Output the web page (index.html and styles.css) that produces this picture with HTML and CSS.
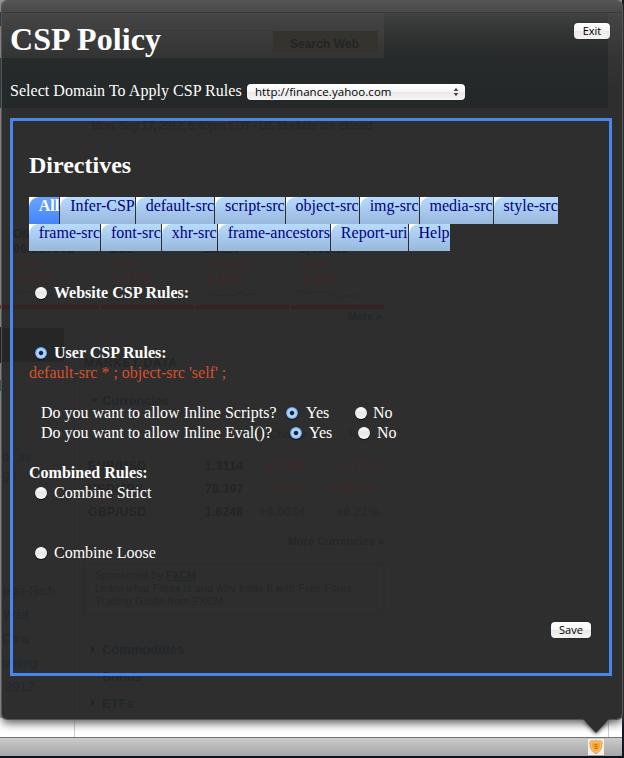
FILE: index.html
```html
<!DOCTYPE html>
<html lang="en">
<head>
<meta charset="utf-8">
<title>CSP Policy</title>
<link rel="stylesheet" href="styles.css">
</head>
<body>
<div class="screen">
  <svg class="page-behind" width="624" height="758" viewBox="0 0 624 758" aria-hidden="true">
    <rect width="624" height="758" fill="#989898"/>
    <path d="M0 12h2v14H0zM0 58h2v50H0z" fill="#152b35"/>
    <path d="M0 305h2v4H0z" fill="#8e201c"/>
    <path d="M0 327h2v36H0z" fill="#000"/>
    <path d="M0 380h2v11H0z" fill="#24506e"/>
    <rect y="718" width="624" height="20" fill="#fff"/>
    <path d="M74.500 718v20M608.500 718v20" stroke="#ccc"/>
    <rect x="622" width="2" height="758" fill="#15151f"/>
  </svg>
  <main class="panel">
    <svg class="ghost" width="620" height="718" viewBox="2 1 620 718" aria-hidden="true">
      <defs><linearGradient id="shade" x1="0" y1="0" x2="0" y2="1"><stop offset="0" stop-color="#222626" stop-opacity=".15"/><stop offset="1" stop-color="#222626" stop-opacity=".7"/></linearGradient></defs>
      <path d="M384 13h224v45H384z" fill="url(#shade)"/>
      <path d="M2 58h606v50H2z" fill="#222626" opacity=".7"/>
      <path d="M2 12.500h620" stroke="#222" opacity=".4"/>
      <path d="M2 30.500h270" stroke="#222" opacity=".15"/>
      <rect x="273" y="31" width="105" height="21" fill="#35332d"/>
      <rect x="2" y="328" width="62" height="34" fill="#262626"/>
      <path d="M2 307h97M101 307h93M196 307h93M291 307h93" stroke="#352324" stroke-width="4"/>
      <path d="M14 291l8 2 7-1 9 4 9 0 8-1M110 292l8 2 8-1 8 5 8 1 9-2M205 296l7-2 8 2 7-2 6 2 8-4 6 3 9-1M298 290l9 3 14-1 9 1 8 6 6-3h15" stroke="#242b2d" fill="none"/>
      <path d="M84 563.500h300v51H84zM74.500 340v378" stroke="#2b2b2b" fill="none"/>
      <path d="M91 398h7l-3.500 4zM91 645l4 4-4 4zM91 699l4 4-4 4z" fill="#20262a"/>
      <g class="ghost-strong">
        <text x="290" y="48" textLength="69">Search Web</text>
        <text class="faint" x="91" y="130" textLength="282">Mon, Sep 17, 2012, 6:40pm EDT - US Markets are closed</text>
        <text x="13" y="238">OIL</text><text x="13" y="253" textLength="61">96.550002</text>
        <text x="109" y="253">1.31</text><text x="203" y="253">1.3114</text><text x="299" y="253" textLength="49">1,461.19</text>
        <text x="84" y="367" textLength="93">MARKET DATA</text>
        <text x="88" y="470" textLength="58">EUR/USD</text><text x="88" y="493" textLength="55">USD/JPY</text><text x="88" y="516" textLength="58">GBP/USD</text>
        <text x="205" y="470" textLength="38">1.3114</text><text x="205" y="493" textLength="38">78.397</text><text x="205" y="516" textLength="38">1.6248</text>
      </g>
      <g class="ghost-red">
        <text x="13" y="268">-2.35</text><text x="13" y="282" textLength="40">-2.37%</text>
        <text x="108" y="268">-0.03</text><text x="108" y="282" textLength="40">-1.71%</text>
        <text x="203" y="268">-0.0014</text><text x="203" y="282" textLength="40">-0.11%</text>
        <text x="298" y="268">-6.00</text><text x="298" y="282" textLength="40">-0.34%</text>
        <text x="262" y="470" textLength="43">-0.0014</text><text x="269" y="493" textLength="36">-0.003</text>
        <text x="339" y="470" textLength="40">-0.11%</text><text x="324" y="493" textLength="55">-0.0038%</text>
      </g>
      <g class="ghost-green"><text x="259" y="516" textLength="46">+0.0034</text><text x="336" y="516" textLength="43">+0.21%</text></g>
      <g class="ghost-head">
        <text x="102" y="405" textLength="67">Currencies</text><text x="102" y="654" textLength="82">Commodities</text>
        <text x="102" y="681" textLength="40">Bonds</text><text x="102" y="708" textLength="32">ETFs</text>
      </g>
      <g class="ghost-small">
        <text x="348" y="320" font-weight="bold">More »</text>
        <text x="288" y="545" textLength="96" font-weight="bold">More Currencies »</text>
        <text x="95" y="579" textLength="68">Sponsored by</text><text x="166" y="579" font-weight="bold" text-decoration="underline">FXCM</text>
        <text x="95" y="592" textLength="257">Learn what Forex is and why trade it with Free Forex</text>
        <text x="95" y="605" textLength="128">Trading Guide from FXCM</text>
        <text x="270" y="438">Change</text><text x="348" y="438">% C</text>
      </g>
      <g class="ghost-link">
        <text x="2" y="461">or as</text><text x="2" y="479">gh</text>
        <text x="3" y="595">ega-Rich</text><text x="3" y="619">Wait</text><text x="2" y="643" textLength="27">China</text><text x="2" y="667">oming</text><text x="5" y="691">2012</text>
      </g>
    </svg>

    <header class="top">
      <div class="title-row"><h1>CSP Policy</h1><button class="button exit">Exit</button></div>
      <div class="domain-row">
        <span class="domain-label">Select Domain To Apply CSP Rules</span>
        <div class="select"><span class="domain">http://finance.yahoo.com</span>
          <svg width="6" height="10" viewBox="0 0 6 10"><path d="M3 .8L5.300 4H.7zM3 9.200L.7 6h4.600z" fill="#444"/></svg>
        </div>
      </div>
    </header>

    <section class="frame">
      <h2>Directives</h2>
      <nav class="tabs">
        <div class="tab-row">
          <a class="tab active"><span>All</span></a><a class="tab"><span>Infer-CSP</span></a><a class="tab"><span>default-src</span></a><a class="tab"><span>script-src</span></a><a class="tab"><span>object-src</span></a><a class="tab"><span>img-src</span></a><a class="tab"><span>media-src</span></a><a class="tab"><span>style-src</span></a>
        </div>
        <div class="tab-row">
          <a class="tab"><span>frame-src</span></a><a class="tab"><span>font-src</span></a><a class="tab"><span>xhr-src</span></a><a class="tab"><span>frame-ancestors</span></a><a class="tab"><span>Report-uri</span></a><a class="tab"><span>Help</span></a>
        </div>
      </nav>
      <div class="rules">
        <label class="option strong"><i class="radio"></i>Website CSP Rules:</label>
        <div class="user-rules">
          <label class="option strong"><i class="radio on"></i>User CSP Rules:</label>
          <p class="policy">default-src * ; object-src 'self' ;</p>
        </div>
        <div class="questions">
          <div class="question scripts"><span>Do you want to allow Inline Scripts?</span><i class="radio on"></i><span>Yes</span><i class="radio"></i><span>No</span></div>
          <div class="question eval"><span>Do you want to allow Inline Eval()?</span><i class="radio on"></i><span>Yes</span><i class="radio"></i><span>No</span></div>
        </div>
        <div class="combined">
          <p class="strong">Combined Rules:</p>
          <label class="option"><i class="radio"></i>Combine Strict</label>
          <label class="option loose"><i class="radio"></i>Combine Loose</label>
        </div>
      </div>
      <div class="actions"><button class="button save">Save</button></div>
    </section>
    <svg class="pointer" width="32" height="18" viewBox="0 0 32 18"><path d="M3 0h26L16 14z" fill="#2e2e2e"/></svg>
  </main>
  <footer class="addon-bar">
    <svg class="shield" width="16" height="16" viewBox="0 0 16 16">
      <rect width="16" height="16" fill="#f3f0ec"/>
      <path d="M8 1.200L10 2.300l2.500-.8L14.400 4l-.8 1.600c.3 4-1.400 6.900-5.600 9.200C3.800 12.500 2.100 9.600 2.400 5.600L1.600 4l1.900-2.500 2.500.8z" fill="#fbbd60" stroke="#d99050" stroke-width=".8"/>
      <path d="M8 3.500c2 1 3 .6 4 .8.200 3.800-1 6-4 8-3-2-4.200-4.200-4-8 1 0 2 .2 4-.8z" fill="#f8a22c"/>
      <path d="M9.400 5.500H7v2h2v2H6.700" fill="none" stroke="#c8721c" stroke-width=".9"/>
    </svg>
  </footer>
  <div class="desktop-edge"></div>
</div>
</body>
</html>
```

FILE: styles.css
```css
* { box-sizing: border-box; }
body { margin: 0; background: #fff; overflow: hidden; }
h1, h2, p { margin: 0; }
.screen {
  position: relative;
  width: 624px;
  height: 758px;
  overflow: hidden;
  display: flex;
  flex-direction: column;
  padding-top: 1px;
  font: 16px/20px "Liberation Serif", "Times New Roman", serif;
  color: #fff;
}
.page-behind { position: absolute; left: 0; top: 0; }
.panel {
  position: relative;
  flex: none;
  width: 620px;
  height: 718px;
  margin: 0 0 18px 2px;
  padding: 0 10px 0 8px;
  border-radius: 5px;
  background: linear-gradient(#545454, #444 16px, #343434 55px, #2e2e2e 90px);
  box-shadow: 0 0 0 1px #555, 0 4px 10px #555;
}
.ghost { position: absolute; left: 0; top: 0; border-radius: 5px; font-family: "Liberation Sans", Arial, sans-serif; }
.ghost-strong { font-size: 12px; font-weight: bold; fill: #232525; }
.ghost-strong .faint { fill: #282828; }
.ghost-red { font-size: 12px; font-weight: bold; fill: #3c2929; }
.ghost-green { font-size: 12px; font-weight: bold; fill: #252b27; }
.ghost-head { font-size: 13px; font-weight: bold; fill: #21272b; }
.ghost-small { font-size: 10.5px; fill: #242729; }
.ghost-link { font-size: 13px; fill: #22292e; }
.top { position: relative; height: 117px; }
.title-row { display: flex; justify-content: space-between; height: 80px; padding-top: 18px; }
h1 { font-size: 32px; line-height: 40px; letter-spacing: .1px; }
.button {
  height: 16px;
  padding: 0;
  border: 0;
  border-radius: 4px;
  background: linear-gradient(#fff, #f7f7f7 50%, #e8e8e8 51%, #f4f4f4);
  box-shadow: 0 0 1px #000;
  font: 11px/16px "Open Sans", sans-serif;
  color: #000;
}
.exit { width: 36px; margin: 4px 2px 0 0; }
.domain-row { display: flex; height: 20px; }
.domain-label { width: 237px; white-space: nowrap; letter-spacing: .04px; }
.select {
  display: flex;
  align-items: center;
  justify-content: space-between;
  width: 218px;
  height: 16px;
  margin-top: 3px;
  padding: 0 6px 0 8px;
  border-radius: 4px;
  background: linear-gradient(#fff, #f7f7f7 50%, #e8e8e8 51%, #f6f6f6);
  font: 11.5px/16px "Open Sans", sans-serif;
  letter-spacing: .06px;
  color: #000;
}
.frame {
  position: relative;
  width: 602px;
  height: 558px;
  padding: 29px 17px 0 16px;
  border: 3px solid #4885ec;
}
h2 { font-size: 24px; line-height: 30px; height: 47px; }
.tab-row { display: flex; height: 27px; }
.tab { flex: none; margin-right: 1px; background: #fff; color: #000080; }
.tab span {
  display: block;
  height: 27px;
  padding: 0 .3px 0 9.7px;
  border-top-left-radius: 10px;
  background: linear-gradient(#b7dbff, #98b8dc);
  line-height: 18px;
}
.tab.active { font-weight: bold; color: #fff; }
.tab.active span { background: linear-gradient(#6ba4ff, #4384fa); }
.rules { padding-top: 32px; }
.option { display: flex; align-items: center; gap: 7px; padding-left: 6px; height: 20px; }
.strong { font-weight: bold; }
.radio {
  display: block;
  width: 12px;
  height: 12px;
  border-radius: 50%;
  background: linear-gradient(#fff, #e6e6e6 50%, #f8f8f8);
  box-shadow: 0 1px 1px #111;
}
.radio.on { background: radial-gradient(circle, #101c30 0 1.4px, #2c507c 2px, #b5dbff 2.8px, #a3ccf8 4.5px, #5c91d0 6px); }
.user-rules { padding-top: 40px; }
.policy { color: #d6522f; }
.questions { padding: 20px 0 20px 12px; }
.question { display: grid; align-items: center; height: 20px; white-space: nowrap; }
.scripts { grid-template-columns: 245px 20px 49px 18px auto; }
.eval { grid-template-columns: 249px 19px 49px 19px auto; }
.loose { margin-top: 40px; }
.actions { display: flex; justify-content: flex-end; padding: 59px 1px 0 0; }
.save { width: 40px; }
.pointer { position: absolute; left: 578px; top: 718px; filter: drop-shadow(0 1px 2px #333); }
.addon-bar {
  position: relative;
  flex: none;
  width: 622px;
  height: 19px;
  display: flex;
  justify-content: flex-end;
  padding: 1px 18px 0 0;
  border-top: 1px solid #737373;
  border-radius: 0 0 4px 0;
  background: linear-gradient(#cbcbcb, #a6a6a6);
}
.desktop-edge { position: relative; height: 2px; background: #0b1220; }
```
